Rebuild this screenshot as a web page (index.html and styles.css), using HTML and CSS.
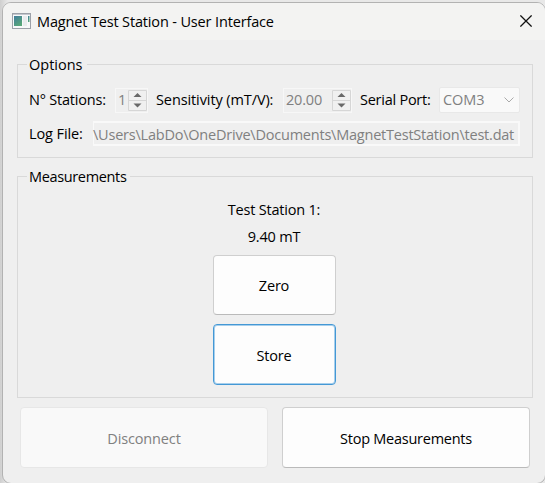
FILE: index.html
```
<!DOCTYPE html>
<html lang="en">
<head>
<meta charset="utf-8">
<title>Magnet Test Station - User Interface</title>
<link rel="stylesheet" href="styles.css">
</head>
<body>
<div class="window">
  <header class="titlebar">
    <svg class="app-icon" width="19" height="16" viewBox="0 0 19 16">
      <defs><linearGradient id="g" x1="0" y1="0" x2="0.6" y2="1"><stop offset="0" stop-color="#417c9d"/><stop offset="1" stop-color="#58a77a"/></linearGradient></defs>
      <rect x=".5" y=".5" width="18" height="15" fill="#f8f9fa" stroke="#9da1a9"/>
      <path d="M1 1.5h17" stroke="#c5c8cf"/>
      <rect x="2" y="3" width="8" height="10" fill="url(#g)"/>
      <rect x="11" y="3" width="4" height="10" fill="#e9ecee"/>
      <rect x="16" y="3" width="1.5" height="6" fill="url(#g)"/>
    </svg>
    <h1 class="title">Magnet Test Station - User Interface</h1>
    <svg class="close" width="12" height="12" viewBox="0 0 12 12"><path d="M.4.4l11.2 11.2M11.6.4L.4 11.6" stroke="#111" stroke-width="1.25"/></svg>
  </header>
  <main class="content">
    <section class="group options">
      <h2 class="legend"><span class="t-options">Options</span></h2>
      <div class="row first">
        <span class="label stations">N° Stations:</span>
        <div class="spin spin-small"><span class="value">1</span>
          <svg width="19" height="21" viewBox="0 0 19 21"><path d="M.5.5h18v20H.5zM0 10.5h19" fill="#f0f0f0" stroke="#d6d6d6"/><path d="M5.500 7h8l-4-4zM5.500 13.500h8l-4 4z" fill="#686868"/></svg>
        </div>
        <span class="label sensitivity">Sensitivity (mT/V):</span>
        <div class="spin spin-large"><span class="value twenty">20.00</span>
          <svg width="19" height="21" viewBox="0 0 19 21"><path d="M.5.5h18v20H.5zM0 10.5h19" fill="#f0f0f0" stroke="#d6d6d6"/><path d="M5.500 7h8l-4-4zM5.500 13.500h8l-4 4z" fill="#686868"/></svg>
        </div>
        <span class="label port">Serial Port:</span>
        <div class="combo"><span class="com">COM3</span>
          <svg width="10" height="6" viewBox="0 0 10 6"><path d="M.5.5L5 5 9.500.5" fill="none" stroke="#aaa"/></svg>
        </div>
      </div>
      <div class="row second">
        <span class="label log">Log File:</span>
        <div class="path"><span class="t-path">\Users\LabDo\OneDrive\Documents\MagnetTestStation\test.dat</span></div>
      </div>
    </section>
    <section class="group measurements">
      <h2 class="legend"><span class="t-meas">Measurements</span></h2>
      <p class="reading t-station">Test Station 1:</p>
      <p class="reading t-value">9.40 mT</p>
      <button class="button small"><span class="t-zero">Zero</span></button>
      <button class="button small active"><span class="t-store">Store</span></button>
    </section>
    <div class="actions">
      <button class="button disabled" disabled><span class="t-disc">Disconnect</span></button>
      <button class="button"><span class="t-stop">Stop Measurements</span></button>
    </div>
  </main>
</div>
</body>
</html>
```
FILE: styles.css
```
* { box-sizing: border-box; }
body {
  margin: 0;
  height: 483px;
  padding: 2px 0 0 2px;
  overflow: hidden;
  background: linear-gradient(90deg, #cfcfcf, #e8e8e8 8px);
  font: 14.5px/20px "Open Sans", "Noto Sans", sans-serif;
  letter-spacing: -0.2px;
  color: #000;
}
h1, h2, p { margin: 0; font: inherit; }
span, h1, p { white-space: nowrap; }
svg { display: block; flex: none; }
.window {
  width: 544px;
  height: 482px;
  border: 1px solid #b2b2b2;
  border-radius: 9px;
  background: #efefef;
  overflow: hidden;
}
.titlebar {
  display: flex;
  align-items: center;
  height: 37px;
  padding: 0 13px 0 9px;
  background: #f3f3f2;
}
.app-icon { margin-bottom: 2px; }
.title { margin-left: 6px; letter-spacing: -0.15px; }
.close { margin-left: auto; margin-bottom: 1px; }
.content { padding: 24px 12px 0 14px; }
.group { width: 516px; border: 1px solid #d9d9d9; }
.options { height: 94px; }
.measurements {
  display: flex;
  flex-direction: column;
  align-items: center;
  height: 222px;
  margin-top: 18px;
  padding-right: 2px;
}
.legend {
  align-self: flex-start;
  width: max-content;
  height: 20px;
  margin: -10px 0 0 9px;
  padding: 0 4px 0 2px;
  background: #efefef;
}
.t-options { letter-spacing: 0; }
.t-meas { letter-spacing: -0.35px; }
.row { display: flex; align-items: center; padding-left: 11px; }
.first { height: 26px; margin-top: 12px; }
.second { height: 25px; margin-top: 8px; }
.stations { width: 86px; }
.sensitivity { width: 127px; margin-left: 8px; letter-spacing: -0.1px; }
.port { width: 79px; margin-left: 8px; letter-spacing: -0.25px; }
.log { width: 64px; letter-spacing: -0.1px; }
.spin {
  display: flex;
  align-items: center;
  justify-content: space-between;
  height: 25px;
  border: 1px solid #f7f7f7;
  color: #808080;
}
.spin-small { width: 33px; padding-left: 2px; }
.spin-large { width: 69px; padding-left: 2px; }
.combo {
  display: flex;
  align-items: center;
  justify-content: space-between;
  width: 81px;
  height: 26px;
  padding: 0 5px 0 3px;
  border: 1px solid #e8e8e8;
  border-radius: 2px;
  background: #f9f9f9;
  color: #808080;
}
.com { letter-spacing: -0.1px; }
.path {
  display: flex;
  align-items: center;
  width: 427px;
  height: 25px;
  border: 2px solid #f9f9f9;
  border-left-width: 1px;
  color: #808080;
}
.t-path { margin: 2px 0 0 -1px; letter-spacing: -0.22px; }
.reading { height: 27px; line-height: 27px; }
.t-station { margin-top: 9px; }
.button {
  display: flex;
  align-items: center;
  justify-content: center;
  width: 248px;
  height: 61px;
  padding: 2px 0 0;
  border: 1px solid #cfcfcf;
  border-bottom-color: #bababa;
  border-radius: 4px;
  background: #fdfdfd;
  color: #000;
  font: inherit;
  letter-spacing: inherit;
}
.small { width: 123px; height: 60px; margin-top: 5px; }
.active {
  height: 61px;
  margin-top: 9px;
  border-color: #4498d5;
  box-shadow: inset 0 0 0 1px #a7cfec;
}
.disabled { border-color: #e7e7e7; background: #f9f9f9; color: #808080; }
.t-disc { letter-spacing: -0.15px; }
.t-stop { letter-spacing: -0.25px; }
.actions { display: flex; gap: 14px; margin: 9px 0 0 3px; }
```
